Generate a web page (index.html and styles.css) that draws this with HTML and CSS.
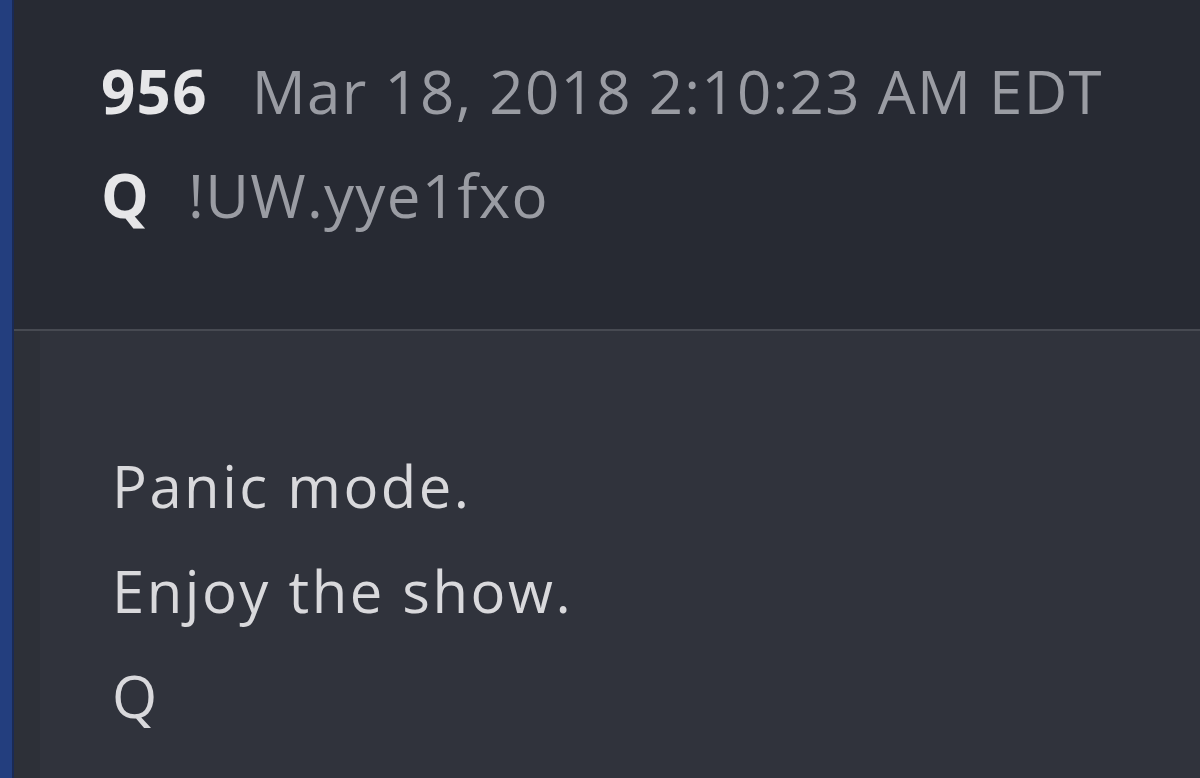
FILE: index.html
```html
<!DOCTYPE html>
<html>

<head>
    <title>Post 956</title>
    <link rel="stylesheet" href="styles.css">
</head>

<body>
    <div class="page">
        <div class="side-bar"></div>
        <div class="post">
            <div class="post-head">
                <div class="head-line">
                    <span class="post-num">956</span>
                    <span class="post-date">Mar 18, 2018 2:10:23 AM EDT</span>
                </div>
                <div class="head-line">
                    <span class="post-name">Q</span>
                    <span class="post-trip">!UW.yye1fxo</span>
                </div>
            </div>
            <div class="post-body">
                <p>Panic mode.</p>
                <p>Enjoy the show.</p>
                <p>Q</p>
            </div>
        </div>
    </div>
</body>

</html>
```

FILE: styles.css
```css
body {
    margin: 0;
    background-color: #30333c;
    font-family: "Open Sans", "Noto Sans", sans-serif;
}

.page {
    display: flex;
    height: 778px;
    overflow: hidden;
}

.side-bar {
    width: 12px;
    background-color: #233e7e;
    border-right: 2px solid #1a2a55;
}

.post {
    flex: 1;
    display: flex;
    flex-direction: column;
}

.post-head {
    height: 331px;
    background-color: #272a33;
    border-bottom: 2px solid #474a52;
    padding: 39px 0 0 87px;
    box-sizing: border-box;
}

.head-line {
    display: flex;
    align-items: baseline;
    gap: 44px;
    font-size: 60px;
    line-height: 104px;
    letter-spacing: 1.3px;
}

.post-num,
.post-name {
    color: #e6e6e8;
    font-weight: 700;
}

.post-date,
.post-trip {
    color: #9a9ca3;
}

.head-line .post-trip {
    margin-left: -6px;
}

.post-body {
    flex: 1;
    background-color: #30333c;
    border-left: 26px solid #2d3038;
    padding: 102px 0 0 72px;
}

.post-body p {
    margin: 0;
    color: #d9d9dc;
    font-size: 58px;
    line-height: 105px;
    letter-spacing: 2.5px;
}
```
